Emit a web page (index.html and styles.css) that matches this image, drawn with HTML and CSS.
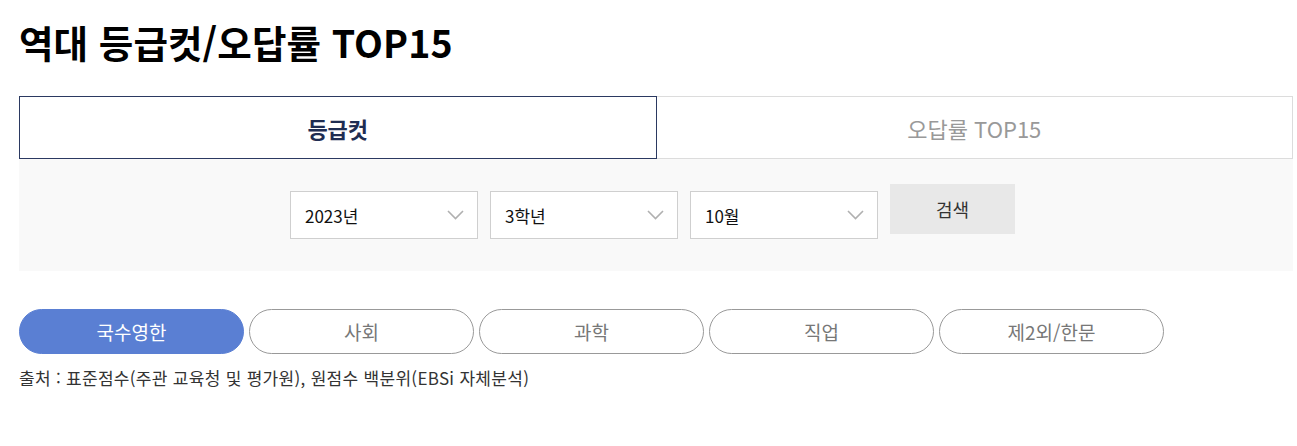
FILE: index.html
```html
<!DOCTYPE html>
<html lang="ko">
<head>
<meta charset="utf-8">
<title>역대 등급컷/오답률 TOP15</title>
<link rel="stylesheet" href="styles.css">
</head>
<body>
<div class="page">
  <h1 class="title">역대 등급컷/오답률 TOP15</h1>
  <div class="tabs">
    <div class="tab tab-active">등급컷</div>
    <div class="tab">오답률 TOP15</div>
  </div>
  <div class="filter">
    <div class="select"><span>2023년</span><svg class="chev" width="17" height="10" viewBox="0 0 17 10"><path d="M1 1 L8.5 8.5 L16 1" fill="none" stroke="#b0b0b0" stroke-width="1.6"/></svg></div>
    <div class="select"><span>3학년</span><svg class="chev" width="17" height="10" viewBox="0 0 17 10"><path d="M1 1 L8.5 8.5 L16 1" fill="none" stroke="#b0b0b0" stroke-width="1.6"/></svg></div>
    <div class="select"><span>10월</span><svg class="chev" width="17" height="10" viewBox="0 0 17 10"><path d="M1 1 L8.5 8.5 L16 1" fill="none" stroke="#b0b0b0" stroke-width="1.6"/></svg></div>
    <div class="search">검색</div>
  </div>
  <div class="pills">
    <div class="pill pill-active">국수영한</div>
    <div class="pill">사회</div>
    <div class="pill">과학</div>
    <div class="pill">직업</div>
    <div class="pill">제2외/한문</div>
  </div>
  <p class="source">출처 : 표준점수(주관 교육청 및 평가원), 원점수 백분위(EBSi 자체분석)</p>
</div>
</body>
</html>
```
FILE: styles.css
```css
* { box-sizing: border-box; }
body {
  margin: 0;
  background: #fff;
  font-family: "Noto Sans CJK KR", "Noto Sans", sans-serif;
  color: #222;
}
.page {
  padding: 13px 4px 0 19px;
}
.title {
  margin: 0;
  font-size: 37.5px;
  font-weight: 700;
  line-height: 57px;
  color: #000;
  letter-spacing: 0.1px;
}
.tabs {
  display: flex;
  margin-top: 26px;
  height: 63px;
}
.tab {
  flex: 1;
  display: flex;
  align-items: center;
  justify-content: center;
  font-size: 22px;
  color: #999;
  border: 1px solid #dcdcdc;
  border-left: none;
  background: #fff;
}
.tab-active {
  border: 1px solid #2b3961;
  color: #1f2d52;
  font-weight: 700;
}
.filter {
  display: flex;
  justify-content: flex-start;
  align-items: flex-start;
  gap: 12px;
  height: 112px;
  padding: 32px 0 0 271px;
  background: #f9f9f9;
}
.select {
  width: 188px;
  height: 48px;
  border: 1px solid #cfcfcf;
  background: #fff;
  display: flex;
  align-items: center;
  justify-content: space-between;
  padding: 0 13px 0 14px;
  font-size: 17px;
  color: #111;
}
.chev { display: block; }
.search {
  width: 125px;
  height: 50px;
  margin-top: -7px;
  background: #e8e8e8;
  display: flex;
  align-items: center;
  justify-content: center;
  font-size: 18px;
  color: #333;
}
.pills {
  display: flex;
  gap: 5px;
  margin-top: 38px;
}
.pill {
  width: 225px;
  height: 45px;
  border-radius: 23px;
  border: 1px solid #999;
  display: flex;
  align-items: center;
  justify-content: center;
  font-size: 19px;
  color: #777;
  background: #fff;
}
.pill-active {
  background: #5a7fd3;
  border-color: #5a7fd3;
  color: #fff;
}
.source {
  margin: 12px 0 0;
  font-size: 17px;
  letter-spacing: 0.3px;
  color: #333;
  line-height: 24px;
}
```
